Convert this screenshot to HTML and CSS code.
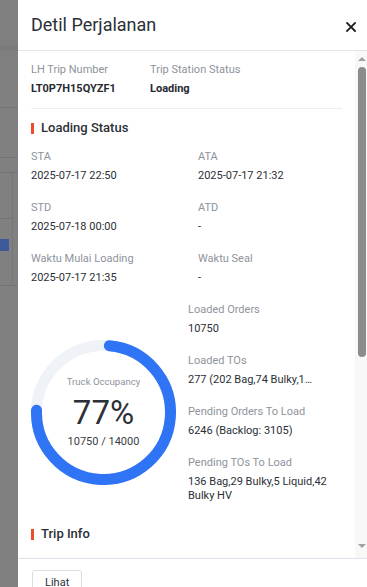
FILE: index.html
```html
<!DOCTYPE html>
<html lang="id">
<head>
<meta charset="utf-8">
<title>Detil Perjalanan</title>
<link rel="stylesheet" href="styles.css">
</head>
<body>
<div class="page">
  <div class="backdrop">
    <div class="bd-top"></div>
    <div class="bd-band"></div>
    <div class="bd-row bd-h56"></div>
    <div class="bd-row bd-h49"></div>
    <div class="bd-row bd-h14"></div>
    <div class="bd-table">
      <div class="bd-cell">
        <div class="bd-row bd-h45"></div>
        <div class="bd-blue"></div>
      </div>
    </div>
  </div>

  <div class="drawer">
    <header class="drawer-header">
      <h1 class="drawer-title">Detil Perjalanan</h1>
      <svg class="close-icon" width="10" height="10" viewBox="0 0 10 10" aria-label="Tutup">
        <path d="M1 1 L9 9 M9 1 L1 9" stroke="#1f1f1f" stroke-width="1.8" stroke-linecap="square" fill="none"/>
      </svg>
    </header>

    <div class="drawer-body">
      <div class="content">
        <div class="summary">
          <div class="field">
            <div class="label">LH Trip Number</div>
            <div class="value strong">LT0P7H15QYZF1</div>
          </div>
          <div class="field">
            <div class="label">Trip Station Status</div>
            <div class="value strong">Loading</div>
          </div>
        </div>

        <div class="section-title">Loading Status</div>
        <div class="fields-grid">
          <div class="field"><div class="label">STA</div><div class="value">2025-07-17 22:50</div></div>
          <div class="field"><div class="label">ATA</div><div class="value">2025-07-17 21:32</div></div>
          <div class="field"><div class="label">STD</div><div class="value">2025-07-18 00:00</div></div>
          <div class="field"><div class="label">ATD</div><div class="value">-</div></div>
          <div class="field"><div class="label">Waktu Mulai Loading</div><div class="value">2025-07-17 21:35</div></div>
          <div class="field"><div class="label">Waktu Seal</div><div class="value">-</div></div>
        </div>

        <div class="occupancy">
          <div class="gauge">
            <svg class="gauge-svg" width="145" height="145" viewBox="0 0 145 145">
              <circle cx="72.5" cy="72.5" r="67" fill="none" stroke="#eff2f7" stroke-width="11"/>
              <path d="M78.34 5.75 A67 67 0 1 1 5.54 70.16" fill="none" stroke="#2f74f5" stroke-width="11" stroke-linecap="round"/>
            </svg>
            <div class="gauge-text">
              <div class="gauge-label">Truck Occupancy</div>
              <div class="gauge-pct">77%</div>
              <div class="gauge-count">10750 / 14000</div>
            </div>
          </div>
          <div class="stats">
            <div class="field"><div class="label">Loaded Orders</div><div class="value">10750</div></div>
            <div class="field"><div class="label">Loaded TOs</div><div class="value">277 (202 Bag,74 Bulky,1…</div></div>
            <div class="field"><div class="label">Pending Orders To Load</div><div class="value">6246 (Backlog: 3105)</div></div>
            <div class="field"><div class="label">Pending TOs To Load</div><div class="value">136 Bag,29 Bulky,5 Liquid,42 Bulky HV</div></div>
          </div>
        </div>

        <div class="section-title trip-title">Trip Info</div>
      </div>

      <div class="scrollbar">
        <span class="sb-arrow sb-up"></span>
        <span class="sb-thumb"></span>
        <span class="sb-space"></span>
        <span class="sb-arrow sb-down"></span>
      </div>
    </div>

    <footer class="drawer-footer">
      <button class="btn" type="button">Lihat</button>
    </footer>
  </div>
</div>
</body>
</html>
```

FILE: styles.css
```css
* { box-sizing: border-box; }

html, body {
  margin: 0;
  padding: 0;
  width: 367px;
  height: 587px;
  overflow: hidden;
  font-family: Roboto, "Noto Sans", sans-serif;
  color: #2b2f36;
}

.page {
  display: flex;
  width: 367px;
  height: 587px;
}

/* dimmed page behind the drawer */
.backdrop {
  width: 18px;
  flex: none;
  background: #808080;
  display: flex;
  flex-direction: column;
  overflow: hidden;
}
.bd-top { height: 45px; flex: none; }
.bd-band { height: 6px; flex: none; background: #7b7b7b; }
.bd-row { flex: none; border-bottom: 1px solid #747474; }
.bd-h56 { height: 57px; }
.bd-h49 { height: 50px; }
.bd-h14 { height: 15px; }
.bd-h45 { height: 46px; }
.bd-table {
  flex: none;
  height: 113px;
  border-bottom: 1px solid #747474;
}
.bd-cell {
  width: 13px;
  height: 100%;
  border-right: 1px solid #767676;
}
.bd-blue {
  margin-top: 20px;
  width: 9px;
  height: 12px;
  background: #3d5b9b;
}

/* drawer */
.drawer {
  flex: 1;
  background: #fff;
  display: flex;
  flex-direction: column;
  min-width: 0;
}

.drawer-header {
  height: 51px;
  flex: none;
  display: flex;
  align-items: center;
  padding: 0 11px 0 13px;
  border-bottom: 1px solid #e4e4ee;
}
.drawer-title {
  margin: 0;
  font-size: 18px;
  line-height: 24px;
  font-weight: 400;
  color: #2b2f36;
}
.close-icon {
  margin-left: auto;
  margin-top: 3px;
  display: block;
}

.drawer-body {
  height: 507px;
  flex: none;
  display: flex;
  overflow: hidden;
}

.content {
  flex: 1;
  min-width: 0;
  padding: 11px 13px 0 13px;
  overflow: hidden;
}

.field { margin-bottom: 17px; }
.label {
  font-size: 11px;
  line-height: 16px;
  color: #8e939c;
}
.value {
  margin-top: 4px;
  font-size: 11px;
  line-height: 14px;
  color: #2b2f36;
}
.value.strong { font-weight: 700; color: #262a31; }

.summary {
  display: grid;
  grid-template-columns: 119px 1fr;
  padding-bottom: 12px;
  border-bottom: 1px solid #eceef1;
}
.summary .field { margin-bottom: 0; }

.section-title {
  margin-top: 9px;
  display: flex;
  align-items: center;
  gap: 7px;
  font-size: 13px;
  line-height: 20px;
  font-weight: 500;
  color: #2b2f36;
}
.section-title::before {
  content: "";
  width: 3px;
  height: 11px;
  background: #ee4d2d;
}
.trip-title { margin-top: 4px; }

.fields-grid {
  margin-top: 11px;
  display: grid;
  grid-template-columns: 167px 1fr;
}

.occupancy {
  display: flex;
  align-items: flex-start;
}
.gauge {
  width: 145px;
  height: 145px;
  flex: none;
  margin-top: 38px;
  display: grid;
}
.gauge-svg, .gauge-text {
  grid-area: 1 / 1;
}
.gauge-svg { display: block; }
.gauge-text {
  align-self: center;
  justify-self: center;
  display: flex;
  flex-direction: column;
  align-items: center;
  margin-top: -1px;
}
.gauge-label {
  font-size: 9.6px;
  line-height: 14px;
  color: #8e939c;
}
.gauge-pct {
  margin-top: 6px;
  font-size: 33px;
  line-height: 36px;
  color: #2b2f36;
}
.gauge-count {
  margin-top: 4px;
  font-size: 11px;
  line-height: 14px;
  color: #3a3e45;
}

.stats {
  flex: 1;
  min-width: 0;
  margin-left: 12px;
}

/* scrollbar */
.scrollbar {
  width: 12px;
  flex: none;
  background: #f8f8f8;
  display: flex;
  flex-direction: column;
  padding: 6px 0 10px 3px;
}
.sb-arrow {
  display: block;
  width: 0;
  height: 0;
  border-left: 4.5px solid transparent;
  border-right: 4.5px solid transparent;
  flex: none;
}
.sb-up { border-bottom: 4.5px solid #a0a0a0; }
.sb-down { border-top: 4.5px solid #a0a0a0; }
.sb-thumb {
  display: block;
  margin-top: 6px;
  width: 8px;
  height: 290px;
  border-radius: 4px;
  background: #8c8c8c;
  flex: none;
}
.sb-space { flex: 1; }

/* footer */
.drawer-footer {
  flex: 1;
  border-top: 1px solid #e2e2ec;
  padding: 11px 14px 0;
}
.btn {
  font-family: Roboto, "Noto Sans", sans-serif;
  font-size: 11px;
  line-height: 14px;
  color: #2b2f36;
  background: #fff;
  border: 1px solid #dcdde0;
  border-radius: 3px;
  padding: 5px 12px 7px;
  margin: 0;
}
```
